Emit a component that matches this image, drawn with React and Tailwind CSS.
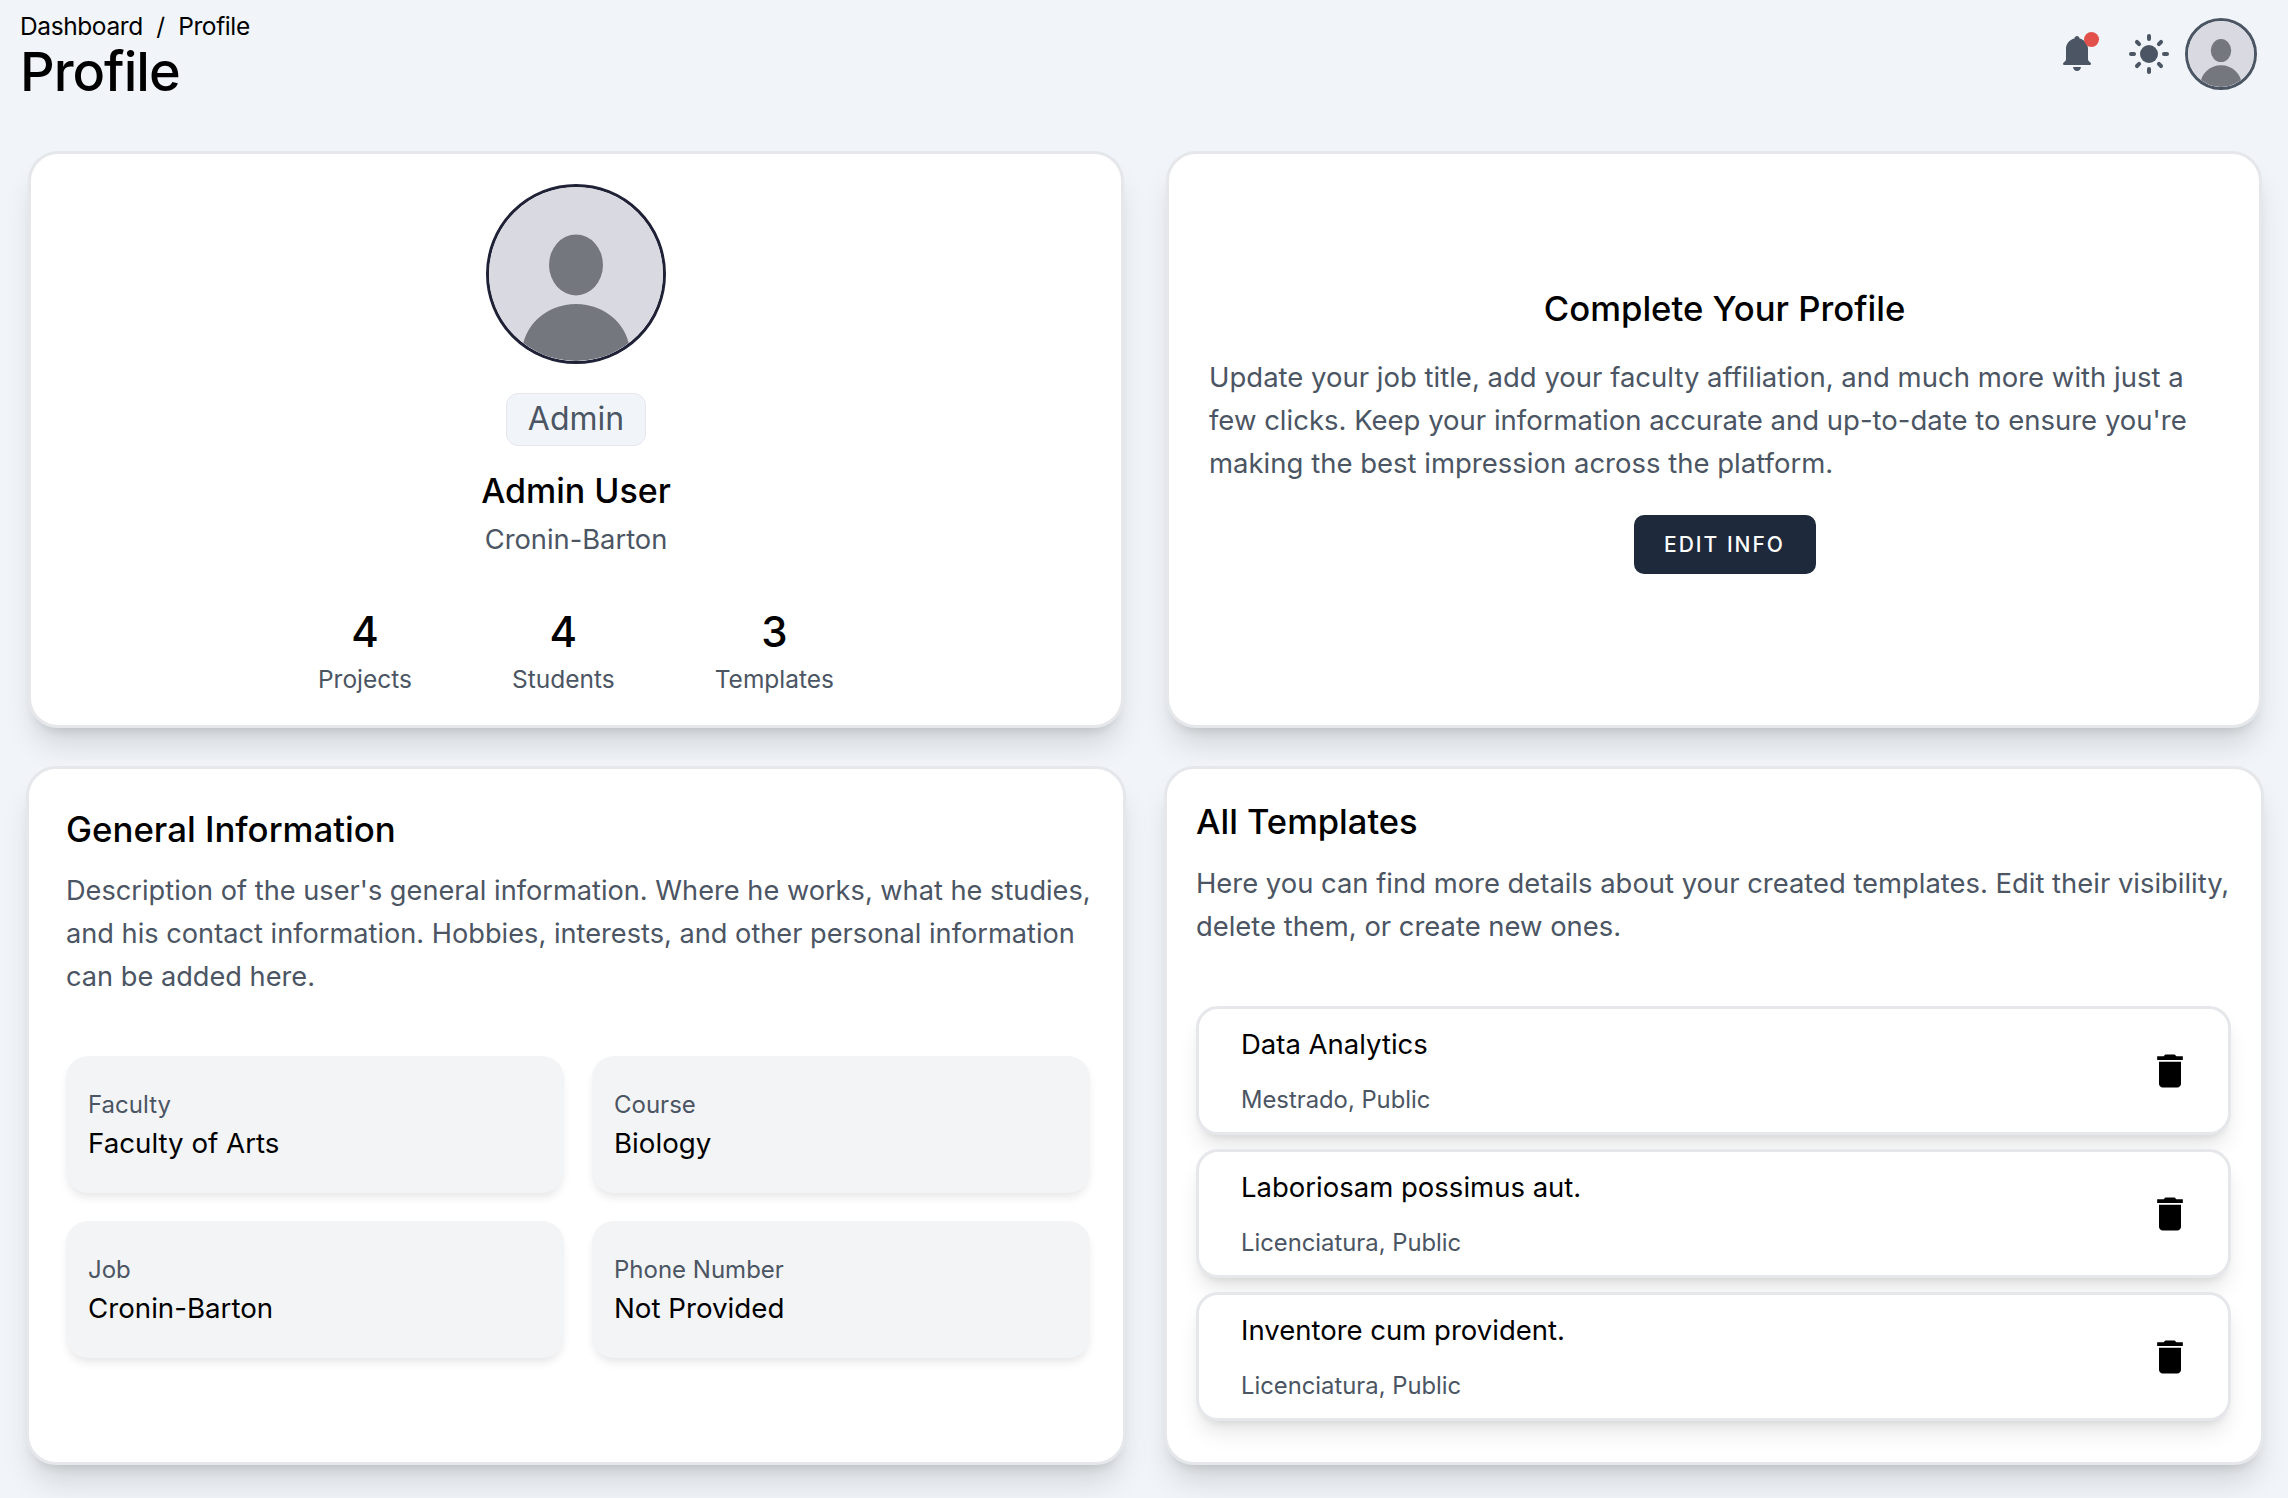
import { MdDelete } from "react-icons/md";

// ── Placeholder avatar ──────────────────────────────────────────────────
function Avatar({ className }) {
  return (
    <svg viewBox="0 0 100 100" className={className}>
      <defs>
        <clipPath id="clip">
          <circle cx="50" cy="50" r="50" />
        </clipPath>
      </defs>
      <g clipPath="url(#clip)">
        <rect width="100" height="100" fill="#d9dae1" />
        <ellipse cx="50" cy="44.8" rx="15.5" ry="17.5" fill="#74777e" />
        <ellipse cx="50" cy="96" rx="31" ry="28.8" fill="#74777e" />
      </g>
    </svg>
  );
}

function SunIcon() {
  return (
    <svg viewBox="0 0 40 40" className="w-10 h-10" fill="#4b5563">
      <circle cx="20" cy="20" r="9" />
      <rect x="18" y="0" width="4" height="7" rx="2" />
      <rect x="18" y="33" width="4" height="7" rx="2" />
      <rect x="0" y="18" width="7" height="4" rx="2" />
      <rect x="33" y="18" width="7" height="4" rx="2" />
      <rect x="18" y="0" width="4" height="7" rx="2" transform="rotate(45 20 20) translate(0 1)" />
      <rect x="18" y="0" width="4" height="7" rx="2" transform="rotate(135 20 20) translate(0 1)" />
      <rect x="18" y="0" width="4" height="7" rx="2" transform="rotate(225 20 20) translate(0 1)" />
      <rect x="18" y="0" width="4" height="7" rx="2" transform="rotate(315 20 20) translate(0 1)" />
    </svg>
  );
}

function BellIcon() {
  return (
    <svg viewBox="0 0 28 36" className="w-7 h-9" fill="#4b5563">
      <path d="M14 0c1.4 0 2.4 1 2.6 2.6C21.6 3.9 25 8 25 13v10c0 1.6.9 2.4 2 3.200.7.5 1 1 1 1.500 0 .6-.5 1.300-1.300 1.300H1.300C.5 29 0 28.300 0 27.700c0-.5.3-1 1-1.500 1.100-.8 2-1.600 2-3.200V13C3 8 6.400 3.900 11.400 2.600 11.600 1 12.600 0 14 0z" />
      <path d="M10 31h8c-.4 2.500-2 4-4 4s-3.600-1.500-4-4z" />
    </svg>
  );
}

const statItems = [
  { value: 4, label: "Projects" },
  { value: 4, label: "Students" },
  { value: 3, label: "Templates" },
];

const infoItems = [
  { label: "Faculty", value: "Faculty of Arts" },
  { label: "Course", value: "Biology" },
  { label: "Job", value: "Cronin-Barton" },
  { label: "Phone Number", value: "Not Provided" },
];

const templates = [
  { title: "Data Analytics", meta: "Mestrado, Public" },
  { title: "Laboriosam possimus aut.", meta: "Licenciatura, Public" },
  { title: "Inventore cum provident.", meta: "Licenciatura, Public" },
];

const cardClass =
  "bg-white rounded-[30px] border-[3px] border-[#e5e7eb] shadow-[0_22px_30px_-6px_rgba(0,0,0,0.13),0_9px_12px_-7px_rgba(0,0,0,0.13)]";

export default function App() {
  return (
    <div className="min-h-[1498px] bg-[#f1f5f9] text-black font-['Inter',sans-serif] overflow-hidden">
      {/* Top bar */}
      <div className="flex justify-between h-[151px] pl-5 pr-[31px]">
        <div className="pt-3">
          <div className="text-[24.500px] leading-[28px] tracking-[-0.4px]">
            Dashboard <span className="mx-[7px]">/</span> Profile
          </div>
          <div className="mt-[2px] text-[54px] leading-[60px] font-medium tracking-[-1px]">Profile</div>
        </div>
        <div className="flex items-start gap-5 pt-[18px]">
          <div className="relative mt-[18px] mr-[18px]">
            <BellIcon />
            <span className="absolute -top-[4.500px] -right-[7.500px] w-[15px] h-[15px] rounded-full bg-[#e2504c]" />
          </div>
          <div className="mt-[16px] -mr-[4px]">
            <SunIcon />
          </div>
          <div className="w-[72px] h-[72px] rounded-full border-[3px] border-[#4b5563] overflow-hidden">
            <Avatar className="w-full h-full" />
          </div>
        </div>
      </div>

      {/* Cards */}
      <div className="grid grid-cols-2 gap-x-[38px] gap-y-[38px] pl-[26px] pr-[24px] grid-rows-[577px_699px]">
        {/* Profile summary */}
        <div className={`${cardClass} mx-[2px] flex flex-col items-center pt-[29.500px]`}>
          <div className="w-[180px] h-[180px] rounded-full border-[3px] border-[#1f2137] overflow-hidden">
            <Avatar className="w-full h-full" />
          </div>
          <div className="mt-[29px] h-[53px] px-[21px] flex items-center rounded-[12px] border border-[#e5e7eb] bg-[#f1f5f9] text-[32px] text-[#4b5563]">
            Admin
          </div>
          <div className="mt-[22px] text-[34px] leading-[46px] font-medium">Admin User</div>
          <div className="mt-[6.500px] text-[27.300px] leading-[40px] text-[#4b5563]">Cronin-Barton</div>
          <div className="mt-[45px] flex gap-[100px]">
            {statItems.map((s) => (
              <div key={s.label} className="flex flex-col items-center">
                <div className="text-[42px] leading-[54px] font-medium">{s.value}</div>
                <div className="mt-[2px] text-[24.500px] leading-[36px] text-[#4b5563]">{s.label}</div>
              </div>
            ))}
          </div>
        </div>

        {/* Complete profile */}
        <div className={`${cardClass} mx-[2px] flex flex-col items-center justify-center pl-[40px] pr-[19px] pb-[20px]`}>
          <div className="text-[34.700px] leading-[46px] font-medium">Complete Your Profile</div>
          <p className="mt-[25px] pr-[8px] text-[27.500px] leading-[43px] text-[#4b5563]">
            Update your job title, add your faculty affiliation, and much more with just a few clicks. Keep your information accurate and up-to-date to ensure you're making the best impression across the platform.
          </p>
          <button className="mt-[30px] w-[182px] h-[59px] rounded-[10px] bg-[#1e293b] text-white text-[21px] font-medium tracking-[2px] uppercase">
            Edit Info
          </button>
        </div>

        {/* General information */}
        <div className={`${cardClass} pl-[37px] pr-[33px] pt-[37px]`}>
          <div className="text-[34.800px] leading-[46px] font-medium">General Information</div>
          <p className="-mr-[14px] mt-[17px] text-[27.200px] leading-[43px] text-[#4b5563]">
            Description of the user's general information. Where he works, what he studies, and his contact information. Hobbies, interests, and other personal information can be added here.
          </p>
          <div className="mt-[58px] grid grid-cols-2 gap-x-[28px] gap-y-[28px]">
            {infoItems.map((item) => (
              <div
                key={item.label}
                className="h-[137px] rounded-[22px] bg-[#f3f4f6] px-[22px] pt-[30px] shadow-[0_6px_10px_-2px_rgba(0,0,0,0.1)]"
              >
                <div className="text-[24px] leading-[37px] text-[#4b5563]">{item.label}</div>
                <div className="text-[27.700px] leading-[40px]">{item.value}</div>
              </div>
            ))}
          </div>
        </div>

        {/* Templates */}
        <div className={`${cardClass} pl-[29px] pr-[30px] pt-[30px]`}>
          <div className="text-[34.500px] leading-[46px] font-medium">All Templates</div>
          <p className="-mr-[10px] mt-[17px] text-[27.400px] leading-[43px] text-[#4b5563]">
            Here you can find more details about your created templates. Edit their visibility, delete them, or create new ones.
          </p>
          <div className="mt-[58px] flex flex-col gap-[14px]">
            {templates.map((t) => (
              <div
                key={t.title}
                className="h-[129px] flex items-center justify-between rounded-[22px] border-[3px] border-[#e5e7eb] bg-white pl-[42px] pr-[36px] shadow-[0_15px_22px_-4px_rgba(0,0,0,0.1),0_6px_9px_-5px_rgba(0,0,0,0.1)]"
              >
                <div>
                  <div className="text-[27.500px] leading-[40px]">{t.title}</div>
                  <div className="mt-[18px] text-[23.800px] leading-[36px] text-[#4b5563]">{t.meta}</div>
                </div>
                <MdDelete className="w-11 h-11" />
              </div>
            ))}
          </div>
        </div>
      </div>
    </div>
  );
}
